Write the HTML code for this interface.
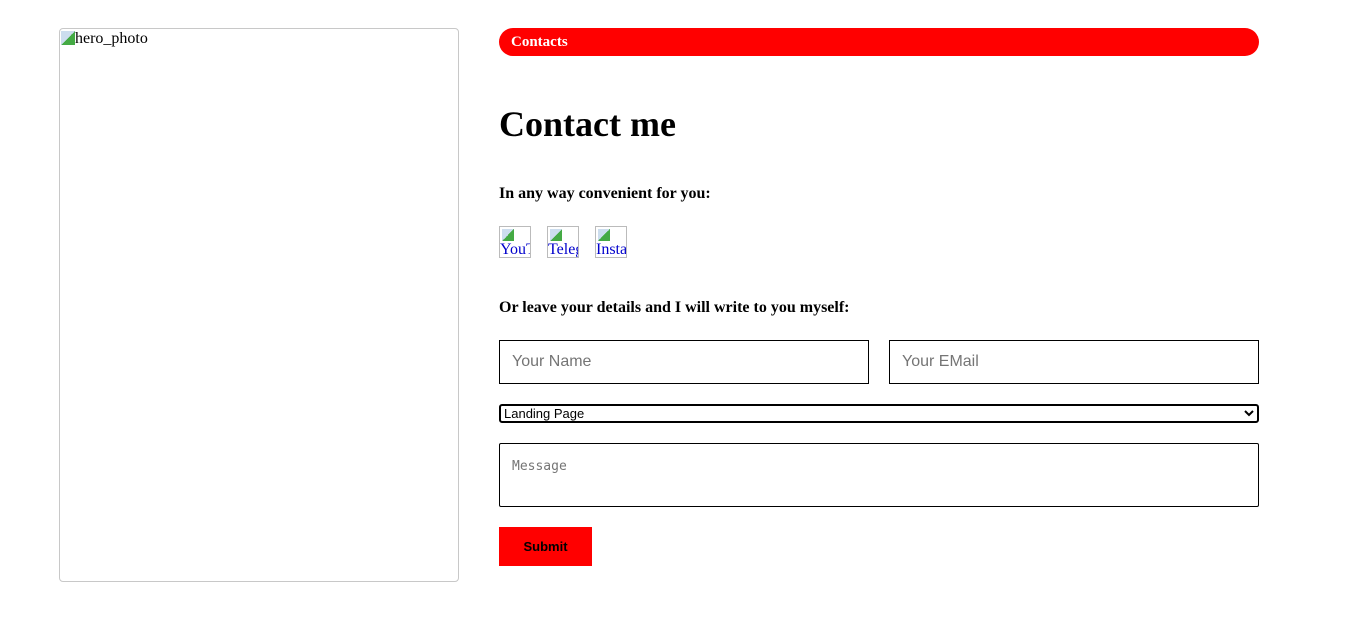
<!DOCTYPE html>
<html><head><meta charset="utf-8"><style>
body{margin:0;background:#fff;font-family:"Liberation Serif",serif;width:1368px;height:619px;overflow:hidden;position:relative}
.hero{position:absolute;left:59px;top:28px;width:400px;height:554px;border:1px solid #c8c8c8;border-radius:4px;box-sizing:border-box}
.hero span{position:absolute;left:1px;top:1px;font-size:16px;color:#000}
.hero span:before{content:"";display:inline-block;width:14px;height:14px;margin-right:0;vertical-align:-2px;background:linear-gradient(135deg,#cde 50%,#4a4 50%)}
.pill{position:absolute;left:499px;top:28px;width:760px;height:28px;background:#f00;border-radius:14px;color:#fff;font-weight:bold;font-size:15px;line-height:28px;padding-left:12px;box-sizing:border-box}
h1{position:absolute;left:499px;top:103px;margin:0;font-size:36px;line-height:42px}
.p{position:absolute;left:499px;font-weight:bold;font-size:16px}
.ic{position:absolute;top:226px;width:32px;height:32px;border:1px solid #bbb;box-sizing:border-box;overflow:hidden;font-size:16px;color:#00c;line-height:16px;padding-top:15px;white-space:nowrap}
.ic:before{content:"";position:absolute;left:2px;top:2px;width:12px;height:12px;background:linear-gradient(135deg,#cde 50%,#4a4 50%)}
.in{position:absolute;top:340px;height:44px;border:1px solid #000;box-sizing:border-box;font-family:"Liberation Sans",sans-serif;font-size:16px;color:#757575;padding:12px}
.sel{position:absolute;left:499px;top:404px;width:760px;height:19px;border:2px solid #000;border-radius:3px;box-sizing:border-box;font-family:"Liberation Sans",sans-serif;font-size:13px;line-height:15px;padding-left:3px}
.ta{position:absolute;left:499px;top:443px;width:760px;height:64px;border:1px solid #000;border-radius:2px;box-sizing:border-box;font-family:"DejaVu Sans Mono",monospace;font-size:13px;color:#757575;padding:15px 12px}
.btn{position:absolute;left:499px;top:527px;width:93px;height:39px;background:#f00;font-family:"Liberation Sans",sans-serif;font-weight:bold;font-size:13px;line-height:39px;text-align:center;color:#000}
</style></head><body>
<div class="hero"><span>hero_photo</span></div>
<div class="pill">Contacts</div>
<h1>Contact me</h1>
<div class="p" style="top:185px">In any way convenient for you:</div>
<div class="ic" style="left:499px">YouTube</div>
<div class="ic" style="left:547px">Telegram</div>
<div class="ic" style="left:595px">Instagram</div>
<div class="p" style="top:299px">Or leave your details and I will write to you myself:</div>
<div class="in" style="left:499px;width:370px">Your Name</div>
<div class="in" style="left:889px;width:370px">Your EMail</div>
<div class="sel">Landing Page<svg style="position:absolute;right:3px;top:3px" width="10" height="9" viewBox="0 0 10 9"><path d="M1 2l4 4 4-4" stroke="#000" stroke-width="2" fill="none"/></svg></div>
<div class="ta">Message</div>
<div class="btn">Submit</div>
</body></html>
